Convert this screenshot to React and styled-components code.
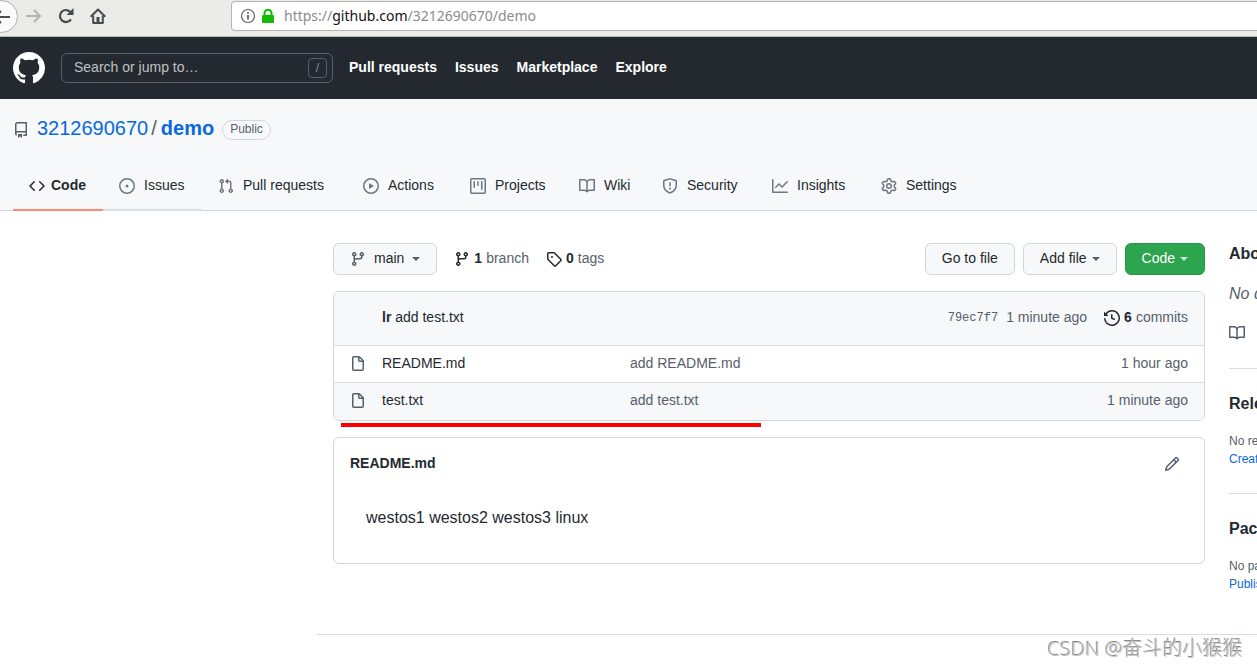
import { useState } from "react";
import styled, { createGlobalStyle, css } from "styled-components";

const GlobalStyle = createGlobalStyle`
    * {
        box-sizing: border-box;
    }

    body {
        margin: 0;
        background-color: #fff;
        color: #24292f;
        font-family: "Liberation Sans", Arial, sans-serif;
        font-size: 14px;
        line-height: 20px;
    }

    a {
        color: inherit;
        text-decoration: none;
    }
`;

const Page = styled.div`
    position: relative;
    min-height: 100vh;
    overflow: hidden;
`;

/* browser toolbar */

const Toolbar = styled.div`
    display: flex;
    align-items: flex-start;
    height: 37px;
    background-color: #ebebe9;
    border-bottom: 1px solid #b8b8b4;
`;

const BackButton = styled.button`
    display: flex;
    align-items: center;
    justify-content: center;
    flex: none;
    width: 33px;
    height: 33px;
    margin-left: -15px;
    padding: 0;
    border: 1px solid #b0b0ab;
    border-radius: 50%;
    background-color: #fbfbfb;
    color: #4a4f50;
`;

const ToolButton = styled.button`
    display: flex;
    align-items: center;
    justify-content: center;
    flex: none;
    width: 32px;
    height: 32px;
    padding: 0;
    border: none;
    background: none;
    color: ${(props) => (props.$dim ? "#b2b3b1" : "#454b4d")};
`;

const AddressBar = styled.div`
    display: flex;
    align-items: center;
    flex: 1;
    gap: 4px;
    height: 30px;
    margin: 1px 0 0 117px;
    padding: 0 0 0 8px;
    border: 1px solid #b5b5b0;
    border-right: none;
    border-radius: 4px 0 0 4px;
    background-color: #fff;
`;

const Url = styled.a`
    margin-left: 4px;
    color: #8b8b8b;
    font-family: "Noto Sans", sans-serif;

    strong {
        color: #111;
        font-weight: 400;
    }
`;

/* site header */

const SiteHeader = styled.header`
    display: flex;
    align-items: center;
    gap: 16px;
    height: 62px;
    padding: 0 13px;
    background-color: #24292f;
    color: #fff;
`;

const Logo = styled.a`
    display: flex;
`;

const SearchBox = styled.label`
    display: flex;
    align-items: center;
    width: 272px;
    height: 30px;
    padding: 0 5px 0 12px;
    border: 1px solid #57606a;
    border-radius: 6px;

    input {
        flex: 1;
        min-width: 0;
        padding: 0 0 2px;
        border: none;
        outline: none;
        background: none;
        color: #fff;
        font: inherit;
    }

    input::placeholder {
        color: #bfc2c5;
        opacity: 1;
    }

    kbd {
        width: 19px;
        height: 20px;
        border: 1px solid #57606a;
        border-radius: 4px;
        color: #8b9198;
        font-family: inherit;
        font-size: 12px;
        line-height: 19px;
        text-align: center;
    }
`;

const SiteNav = styled.nav`
    display: flex;
    gap: 18px;
    padding-bottom: 2px;
    font-weight: 700;
`;

/* repository header */

const RepoHead = styled.div`
    padding: 15px 13px 0;
    border-bottom: 1px solid #d0d7de;
    background-color: #f6f8fa;
`;

const RepoTitle = styled.h1`
    display: flex;
    align-items: center;
    height: 28px;
    margin: 0 0 20px;
    color: #57606a;
    font-size: 20px;
    font-weight: 400;

    a {
        color: #0969da;
    }

    svg {
        margin: 3px 8px 0 0;
    }

    a:last-of-type {
        font-weight: 700;
    }
`;

const Slash = styled.span`
    margin: 0 4px 0 3px;
`;

const Pill = styled.span`
    height: 20px;
    margin: 3px 0 0 8px;
    padding: 0 7px;
    border: 1px solid #d0d7de;
    border-radius: 10px;
    font-size: 12px;
    line-height: 17px;
`;

const Tabs = styled.nav`
    display: flex;
    height: 48px;
`;

const Tab = styled.a`
    display: flex;
    align-items: center;
    flex: none;
    gap: ${(props) => (props.$active ? 6 : 9)}px;
    width: ${(props) => props.$width}px;
    height: 49px;
    padding: 0 0 2px 16px;
    border-bottom: 2px solid ${(props) => (props.$hovered ? "#dadfe3" : "transparent")};
    white-space: nowrap;

    svg {
        margin-top: 2px;
        color: #6e7781;
    }

    ${(props) =>
        props.$active &&
        css`
            border-bottom-color: #fd8c73;
            font-weight: 700;

            svg {
                color: #24292f;
            }
        `}
`;

/* content */

/* the sidebar keeps its full width and runs past the window edge */
const Content = styled.div`
    display: grid;
    grid-template-columns: minmax(0, 1fr) 296px;
    gap: 24px;
    margin: 32px -268px 0 333px;
`;

const Actions = styled.div`
    display: flex;
    align-items: center;
    gap: 8px;
    margin-bottom: 16px;
`;

const Button = styled.button`
    display: flex;
    align-items: center;
    gap: ${(props) => (props.$roomy ? 8 : 5)}px;
    height: 32px;
    padding: 0 16px 2px;
    border: 1px solid ${(props) => (props.$primary ? "#2a9147" : "#d3d6d9")};
    border-radius: 6px;
    background-color: ${(props) => (props.$primary ? "#2da44e" : "#f6f8fa")};
    color: ${(props) => (props.$primary ? "#fff" : "#24292f")};
    font: inherit;
    white-space: nowrap;

    svg {
        margin-top: 2px;
        color: #57606a;
    }
`;

const Caret = styled.span`
    margin-top: 2px;
    border: 4px solid transparent;
    border-top-color: ${(props) => (props.$light ? "#c9e8d1" : "#57606a")};
    border-bottom: none;
`;

const Stat = styled.a`
    display: flex;
    align-items: center;
    gap: 4px;
    height: 32px;
    margin-left: 9px;
    padding-bottom: 2px;
    color: #57606a;

    svg {
        margin-top: 2px;
    }

    svg,
    strong {
        color: #24292f;
    }
`;

const Spacer = styled.div`
    flex: 1;
`;

const Box = styled.section`
    overflow: hidden;
    border: 1px solid #d0d7de;
    border-radius: 6px;
`;

const CommitBar = styled.div`
    display: flex;
    align-items: center;
    height: 53px;
    padding: 0 16px 4px 48px;
    background-color: #f6f8fa;

    ${Stat} {
        padding-bottom: 0;
    }
`;

const CommitHash = styled.a`
    margin: 2px 8px 0 0;
    color: #57606a;
    font-family: "Liberation Mono", monospace;
    font-size: 12px;
`;

const CommitTime = styled.span`
    margin-right: 8px;
    color: #57606a;
`;

const FileTable = styled.table`
    width: 100%;
    table-layout: fixed;
    border-spacing: 0;

    td {
        height: 37px;
        padding: 0 0 2px;
        border-top: 1px solid #d8dee4;
        color: #57606a;
    }

    tr:last-child td {
        height: 38px;
        padding-bottom: 4px;
        background-color: #f6f8fa;
    }

    td:first-child {
        width: 48px;
        padding-left: 16px;
    }

    td:nth-child(2) {
        width: 248px;
        color: #24292f;
    }

    td:last-child {
        width: 120px;
        padding-right: 16px;
        text-align: right;
    }

    svg {
        display: block;
        margin-top: 2px;
    }
`;

const Underline = styled.div`
    width: 420px;
    max-width: 100%;
    height: 4px;
    margin: 2px 0 10px 8px;
    background-color: #ff0000;
`;

const ReadmeHead = styled.div`
    display: flex;
    align-items: center;
    justify-content: space-between;
    padding: 15px 24px 0 16px;

    h2 {
        margin: 0 0 2px;
        font-size: 14px;
        line-height: 20px;
    }

    button {
        display: flex;
        padding: 0;
        border: none;
        background: none;
        color: #57606a;
    }
`;

const ReadmeBody = styled.p`
    margin: 0;
    padding: 31px 32px 33px;
    font-size: 16px;
    line-height: 24px;
`;

const Sidebar = styled.aside`
    white-space: nowrap;
`;

const SideBlock = styled.section`
    height: 125px;
    padding-top: 25px;
    border-top: 1px solid #d8dee4;
    color: #57606a;
    font-size: 12px;
    line-height: 18px;

    &:first-child {
        height: auto;
        padding: 1px 0 26px;
        border-top: none;
    }

    h2 {
        margin: 0 0 18px;
        color: #24292f;
        font-size: 16px;
        line-height: 20px;
    }

    p {
        margin: 0;
    }

    p a {
        color: #0969da;
    }
`;

const About = styled.p`
    font-size: 16px;
    font-style: italic;
    line-height: 24px;
`;

const ReadmeLink = styled.a`
    display: flex;
    align-items: center;
    gap: 16px;
    margin-top: 18px;
    font-size: 14px;
`;

const Footer = styled.footer`
    height: 32px;
    margin: 16px 0 0 317px;
    border-top: 1px solid #d8dee4;
`;

const Watermark = styled.div`
    position: absolute;
    right: 14px;
    top: 635px;
    color: #c4c4c4;
    font-family: "Noto Sans", "Noto Sans CJK SC", sans-serif;
    font-size: 20px;
    font-weight: 300;
    line-height: 28px;
    text-shadow: -1px -1px 0 #8a8a8a;
`;

const icons = {
    github: "M8 0C3.58 0 0 3.58 0 8c0 3.54 2.29 6.53 5.47 7.59.4.07.55-.17.55-.38 0-.19-.01-.82-.01-1.49-2.01.37-2.53-.49-2.69-.94-.09-.23-.48-.94-.82-1.13-.28-.15-.68-.52-.01-.53.63-.01 1.08.58 1.23.82.72 1.21 1.87.87 2.33.66.07-.52.28-.87.51-1.07-1.78-.2-3.64-.89-3.64-3.95 0-.87.31-1.59.82-2.15-.08-.2-.36-1.02.08-2.12 0 0 .67-.21 2.2.82.64-.18 1.32-.27 2-.27.68 0 1.36.09 2 .27 1.53-1.04 2.2-.82 2.2-.82.44 1.1.16 1.92.08 2.12.51.56.82 1.27.82 2.15 0 3.07-1.87 3.75-3.65 3.95.29.25.54.73.54 1.48 0 1.07-.01 1.93-.01 2.2 0 .21.15.46.55.38A8.013 8.013 0 0016 8c0-4.42-3.58-8-8-8z",
    repo: "M2 2.5A2.5 2.5 0 014.5 0h8.75a.75.75 0 01.75.75v12.5a.75.75 0 01-.75.75h-2.5a.75.75 0 110-1.5h1.75v-2h-8a1 1 0 00-.714 1.7.75.75 0 01-1.072 1.05A2.495 2.495 0 012 11.5v-9zm10.5-1V9h-8c-.356 0-.694.074-1 .208V2.5a1 1 0 011-1h8zM5 12.25v3.25a.25.25 0 00.4.2l1.45-1.087a.25.25 0 01.3 0L8.6 15.7a.25.25 0 00.4-.2v-3.25a.25.25 0 00-.25-.25h-3.5a.25.25 0 00-.25.25z",
    code: "M4.72 3.22a.75.75 0 011.06 1.06L2.06 8l3.72 3.72a.75.75 0 11-1.06 1.06L.47 8.53a.75.75 0 010-1.06l4.25-4.25zm6.56 0a.75.75 0 10-1.06 1.06L13.94 8l-3.72 3.72a.75.75 0 101.06 1.06l4.25-4.25a.75.75 0 000-1.06l-4.25-4.25z",
    issue: "M8 9.5a1.5 1.5 0 100-3 1.5 1.5 0 000 3zM8 0a8 8 0 100 16A8 8 0 008 0zM1.5 8a6.5 6.5 0 1113 0 6.5 6.5 0 01-13 0z",
    pull: "M7.177 3.073L9.573.677A.25.25 0 0110 .854v4.792a.25.25 0 01-.427.177L7.177 3.427a.25.25 0 010-.354zM3.75 2.5a.75.75 0 100 1.5.75.75 0 000-1.5zm-2.25.75a2.25 2.25 0 113 2.122v5.256a2.251 2.251 0 11-1.5 0V5.372A2.25 2.25 0 011.5 3.25zM11 2.5h-1V4h1a1 1 0 011 1v5.628a2.251 2.251 0 101.5 0V5A2.5 2.5 0 0011 2.5zm1 10.25a.75.75 0 111.5 0 .75.75 0 01-1.5 0zM3.75 12a.75.75 0 100 1.5.75.75 0 000-1.5z",
    play: "M1.5 8a6.5 6.5 0 1113 0 6.5 6.5 0 01-13 0zM8 0a8 8 0 100 16A8 8 0 008 0zM6.379 5.227A.25.25 0 006 5.442v5.117a.25.25 0 00.379.214l4.264-2.559a.25.25 0 000-.428L6.379 5.227z",
    project: "M1.75 0A1.75 1.75 0 000 1.75v12.5C0 15.216.784 16 1.75 16h12.5A1.75 1.75 0 0016 14.25V1.75A1.75 1.75 0 0014.25 0H1.75zM1.5 1.75a.25.25 0 01.25-.25h12.5a.25.25 0 01.25.25v12.5a.25.25 0 01-.25.25H1.75a.25.25 0 01-.25-.25V1.75zM11.75 3a.75.75 0 00-.75.75v7.5a.75.75 0 001.5 0v-7.5a.75.75 0 00-.75-.75zm-8.25.75a.75.75 0 011.5 0v5.5a.75.75 0 01-1.5 0v-5.5zM8 3a.75.75 0 00-.75.75v3.5a.75.75 0 001.5 0v-3.5A.75.75 0 008 3z",
    book: "M0 1.75A.75.75 0 01.75 1h4.253c1.227 0 2.317.59 3 1.501A3.744 3.744 0 0111.006 1h4.245a.75.75 0 01.75.75v10.5a.75.75 0 01-.75.75h-4.507a2.25 2.25 0 00-1.591.659l-.622.621a.75.75 0 01-1.06 0l-.622-.621A2.25 2.25 0 005.258 13H.75a.75.75 0 01-.75-.75V1.75zm8.755 3a2.25 2.25 0 012.25-2.25H14.5v9h-3.757c-.71 0-1.4.201-1.992.572l.004-7.322zm-1.504 7.324l.004-5.073-.002-2.253A2.25 2.25 0 005.003 2.5H1.5v9h3.757a3.75 3.75 0 011.994.574z",
    shield: "M7.467.133a1.75 1.75 0 011.066 0l5.25 1.68A1.75 1.75 0 0115 3.48V7c0 1.566-.32 3.182-1.303 4.682-.983 1.498-2.585 2.813-5.032 3.855a1.7 1.7 0 01-1.33 0c-2.447-1.042-4.049-2.357-5.032-3.855C1.32 10.182 1 8.566 1 7V3.48a1.75 1.75 0 011.217-1.667l5.25-1.68zm.61 1.429a.25.25 0 00-.153 0l-5.25 1.68a.25.25 0 00-.174.238V7c0 1.358.275 2.666 1.057 3.86.784 1.194 2.121 2.34 4.366 3.297a.2.2 0 00.154 0c2.245-.956 3.582-2.104 4.366-3.298C13.225 9.666 13.5 8.36 13.5 7V3.48a.25.25 0 00-.174-.237l-5.25-1.68zM9 10.5a1 1 0 11-2 0 1 1 0 012 0zm-.25-5.75a.75.75 0 10-1.5 0v3a.75.75 0 001.5 0v-3z",
    graph: "M1.5 1.75a.75.75 0 00-1.5 0v12.5c0 .414.336.75.75.75h14.5a.75.75 0 000-1.5H1.5V1.75zm14.28 2.53a.75.75 0 00-1.06-1.06L10 7.94 7.53 5.47a.75.75 0 00-1.06 0L3.22 8.72a.75.75 0 001.06 1.06L7 7.06l2.47 2.47a.75.75 0 001.06 0l5.25-5.25z",
    gear: "M7.429 1.525a6.593 6.593 0 011.142 0c.036.003.108.036.137.146l.289 1.105c.147.56.55.967.997 1.189.174.086.341.183.501.29.417.278.97.423 1.53.27l1.102-.303c.11-.03.175.016.195.046.219.31.41.641.573.989.014.031.022.11-.059.19l-.815.806c-.411.406-.562.957-.53 1.456a4.588 4.588 0 010 .582c-.032.499.119 1.05.53 1.456l.815.806c.08.08.073.159.059.19a6.494 6.494 0 01-.573.99c-.02.029-.086.074-.195.045l-1.103-.303c-.559-.153-1.112-.008-1.529.27-.16.107-.327.204-.5.29-.449.222-.851.628-.998 1.189l-.289 1.105c-.029.11-.101.143-.137.146a6.613 6.613 0 01-1.142 0c-.036-.003-.108-.037-.137-.146l-.289-1.105c-.147-.56-.55-.967-.997-1.189a4.502 4.502 0 01-.501-.29c-.417-.278-.97-.423-1.53-.27l-1.102.303c-.11.03-.175-.016-.195-.046a6.492 6.492 0 01-.573-.989c-.014-.031-.022-.11.059-.19l.815-.806c.411-.406.562-.957.53-1.456a4.587 4.587 0 010-.582c.032-.499-.119-1.05-.53-1.456l-.815-.806c-.08-.08-.073-.159-.059-.19a6.44 6.44 0 01.573-.99c.02-.029.086-.075.195-.045l1.103.303c.559.153 1.112.008 1.529-.27.16-.107.327-.204.5-.29.449-.222.851-.628.998-1.189l.289-1.105c.029-.11.101-.143.137-.146zM8 0c-.236 0-.47.01-.701.03-.743.065-1.29.615-1.458 1.261l-.29 1.106c-.017.066-.078.158-.211.224a5.994 5.994 0 00-.668.386c-.123.082-.233.09-.3.071L3.27 2.776c-.644-.177-1.392.02-1.82.63a7.977 7.977 0 00-.704 1.217c-.315.675-.111 1.422.363 1.891l.815.806c.05.048.098.147.088.294a6.084 6.084 0 000 .772c.01.147-.038.246-.088.294l-.815.806c-.474.469-.678 1.216-.363 1.891.2.428.436.835.704 1.218.428.609 1.176.806 1.82.63l1.103-.303c.066-.019.176-.011.299.071.213.143.436.272.668.386.133.066.194.158.212.224l.289 1.106c.169.646.715 1.196 1.458 1.26a8.094 8.094 0 001.402 0c.743-.064 1.29-.614 1.458-1.26l.29-1.106c.017-.066.078-.158.211-.224a5.98 5.98 0 00.668-.386c.123-.082.233-.09.3-.071l1.102.302c.644.177 1.392-.02 1.82-.63.268-.382.505-.789.704-1.217.315-.675.111-1.422-.364-1.891l-.814-.806c-.05-.048-.098-.147-.088-.294a6.1 6.1 0 000-.772c-.01-.147.039-.246.088-.294l.814-.806c.475-.469.679-1.216.364-1.891a7.992 7.992 0 00-.704-1.218c-.428-.609-1.176-.806-1.82-.63l-1.103.303c-.066.019-.176.011-.299-.071a5.991 5.991 0 00-.668-.386c-.133-.066-.194-.158-.212-.224L10.16 1.29C9.99.645 9.444.095 8.701.031A8.094 8.094 0 008 0zm1.5 8a1.5 1.5 0 11-3 0 1.5 1.5 0 013 0zM11 8a3 3 0 11-6 0 3 3 0 016 0z",
    branch: "M11.75 2.5a.75.75 0 100 1.5.75.75 0 000-1.5zm-2.25.75a2.25 2.25 0 113 2.122V6A2.5 2.5 0 0110 8.5H6a1 1 0 00-1 1v1.128a2.251 2.251 0 11-1.5 0V5.372a2.25 2.25 0 111.5 0v1.836A2.492 2.492 0 016 7h4a1 1 0 001-1v-.628A2.25 2.25 0 019.5 3.25zM4.25 12a.75.75 0 100 1.5.75.75 0 000-1.5zM3.5 3.25a.75.75 0 111.5 0 .75.75 0 01-1.5 0z",
    tag: "M2.5 7.775V2.75a.25.25 0 01.25-.25h5.025a.25.25 0 01.177.073l6.25 6.25a.25.25 0 010 .354l-5.025 5.025a.25.25 0 01-.354 0l-6.25-6.25a.25.25 0 01-.073-.177zm-1.5 0V2.75C1 1.784 1.784 1 2.75 1h5.025c.464 0 .91.184 1.238.513l6.25 6.25a1.75 1.75 0 010 2.474l-5.026 5.026a1.75 1.75 0 01-2.474 0l-6.25-6.25A1.75 1.75 0 011 7.775zM6 5a1 1 0 100 2 1 1 0 000-2z",
    history: "M1.643 3.143L.427 1.927A.25.25 0 000 2.104V5.75c0 .138.112.25.25.25h3.646a.25.25 0 00.177-.427L2.715 4.215a6.5 6.5 0 11-1.18 4.458.75.75 0 10-1.493.154 8.001 8.001 0 101.6-5.684zM7.75 4a.75.75 0 01.75.75v2.992l2.028.812a.75.75 0 01-.557 1.392l-2.5-1A.75.75 0 017 8.25v-3.5A.75.75 0 017.75 4z",
    file: "M3.75 1.5a.25.25 0 00-.25.25v11.5c0 .138.112.25.25.25h8.5a.25.25 0 00.25-.25V6H9.75A1.75 1.75 0 018 4.25V1.5H3.75zm5.75.56v2.19c0 .138.112.25.25.25h2.19L9.5 2.06zM2 1.75C2 .784 2.784 0 3.75 0h5.086c.464 0 .909.184 1.237.513l3.414 3.414c.329.328.513.773.513 1.237v8.086A1.75 1.75 0 0112.25 15h-8.5A1.75 1.75 0 012 13.25V1.75z",
    pencil: "M11.013 1.427a1.75 1.75 0 012.474 0l1.086 1.086a1.75 1.75 0 010 2.474l-8.61 8.61c-.21.21-.47.364-.756.445l-3.251.93a.75.75 0 01-.927-.928l.929-3.25a1.75 1.75 0 01.445-.758l8.61-8.61zm1.414 1.06a.25.25 0 00-.354 0L10.811 3.75l1.439 1.44 1.263-1.263a.25.25 0 000-.354l-1.086-1.086zM11.189 6.25L9.75 4.81l-6.286 6.287a.25.25 0 00-.064.108l-.558 1.953 1.953-.558a.249.249 0 00.108-.064l6.286-6.286z",
};

function Icon({ name, size = 16 }) {
    return (
        <svg width={size} height={size} viewBox="0 0 16 16" fill="currentColor" aria-hidden="true">
            <path fillRule="evenodd" d={icons[name]} />
        </svg>
    );
}

const tabs = [
    { label: "Code", icon: "code", width: 90, active: true },
    { label: "Issues", icon: "issue", width: 99, hovered: true },
    { label: "Pull requests", icon: "pull", width: 145 },
    { label: "Actions", icon: "play", width: 107 },
    { label: "Projects", icon: "project", width: 109 },
    { label: "Wiki", icon: "book", width: 83 },
    { label: "Security", icon: "shield", width: 110 },
    { label: "Insights", icon: "graph", width: 109 },
    { label: "Settings", icon: "gear", width: 108 },
];

const files = [
    { name: "README.md", message: "add README.md", age: "1 hour ago" },
    { name: "test.txt", message: "add test.txt", age: "1 minute ago" },
];

function BrowserToolbar() {
    return (
        <Toolbar>
            <BackButton aria-label="Back">
                <svg width="18" height="16" viewBox="0 0 18 16" fill="none" stroke="currentColor" strokeWidth="2">
                    <path d="M17 8H2M8 2L2 8l6 6" />
                </svg>
            </BackButton>
            <ToolButton $dim aria-label="Forward">
                <svg width="16" height="14" viewBox="0 0 16 14" fill="none" stroke="currentColor" strokeWidth="2">
                    <path d="M0 7h14M8 1l6 6-6 6" />
                </svg>
            </ToolButton>
            <ToolButton aria-label="Reload">
                <svg width="16" height="16" viewBox="0 0 16 16" fill="none" stroke="currentColor" strokeWidth="2.2">
                    <path d="M13 11.3A6 6 0 1 1 12.6 4.2" />
                    <path d="M15.5 0v7H8.5z" fill="currentColor" stroke="none" />
                </svg>
            </ToolButton>
            <ToolButton aria-label="Home">
                <svg width="16" height="16" viewBox="0 0 16 16" fill="none" stroke="currentColor" strokeLinejoin="round">
                    <path d="M.7 8.7L8 1.5l7.3 7.2" strokeWidth="2" />
                    <path d="M3.2 7.5v7.4h9.6V7.5" strokeWidth="2" />
                    <path d="M6.5 9h3v6h-3z" fill="currentColor" stroke="none" />
                </svg>
            </ToolButton>
            <AddressBar>
                <svg width="16" height="16" viewBox="0 0 16 16" fill="none" stroke="#606060">
                    <circle cx="8" cy="8" r="6.5" strokeWidth="1.2" />
                    <path d="M8 7v4.5M8 4v1.8" strokeWidth="1.8" />
                </svg>
                <svg width="16" height="16" viewBox="0 0 16 16" fill="#12bc00">
                    <rect x="2" y="7" width="12" height="8" rx="1" />
                    <path d="M4.5 8V5.2a3.5 3.5 0 017 0V8" fill="none" stroke="#12bc00" strokeWidth="2" />
                </svg>
                <Url href="#">
                    https://<strong>github.com</strong>/3212690670/demo
                </Url>
            </AddressBar>
        </Toolbar>
    );
}

export default function App() {
    const [search, setSearch] = useState("");

    return (
        <Page>
            <GlobalStyle />
            <BrowserToolbar />
            <SiteHeader>
                <Logo href="#" aria-label="Homepage">
                    <Icon name="github" size={32} />
                </Logo>
                <SearchBox>
                    <input
                        aria-label="Search"
                        placeholder="Search or jump to…"
                        value={search}
                        onChange={(ev) => setSearch(ev.target.value)}
                    />
                    <kbd>/</kbd>
                </SearchBox>
                <SiteNav>
                    <a href="#">Pull requests</a>
                    <a href="#">Issues</a>
                    <a href="#">Marketplace</a>
                    <a href="#">Explore</a>
                </SiteNav>
            </SiteHeader>

            <RepoHead>
                <RepoTitle>
                    <Icon name="repo" />
                    <a href="#">3212690670</a>
                    <Slash>/</Slash>
                    <a href="#">demo</a>
                    <Pill>Public</Pill>
                </RepoTitle>
                <Tabs>
                    {tabs.map((tab) => (
                        <Tab
                            key={tab.label}
                            href="#"
                            $width={tab.width}
                            $active={tab.active}
                            $hovered={tab.hovered}
                        >
                            <Icon name={tab.icon} />
                            {tab.label}
                        </Tab>
                    ))}
                </Tabs>
            </RepoHead>

            <Content>
                <main>
                    <Actions>
                        <Button $roomy>
                            <Icon name="branch" />
                            main
                            <Caret />
                        </Button>
                        <Stat href="#">
                            <Icon name="branch" />
                            <strong>1</strong> branch
                        </Stat>
                        <Stat href="#">
                            <Icon name="tag" />
                            <strong>0</strong> tags
                        </Stat>
                        <Spacer />
                        <Button>Go to file</Button>
                        <Button>
                            Add file
                            <Caret />
                        </Button>
                        <Button $primary>
                            Code
                            <Caret $light />
                        </Button>
                    </Actions>

                    <Box>
                        <CommitBar>
                            <a href="#">
                                <strong>lr</strong> add test.txt
                            </a>
                            <Spacer />
                            <CommitHash href="#">79ec7f7</CommitHash>
                            <CommitTime>1 minute ago</CommitTime>
                            <Stat href="#">
                                <Icon name="history" />
                                <strong>6</strong> commits
                            </Stat>
                        </CommitBar>
                        <FileTable>
                            <tbody>
                                {files.map((file) => (
                                    <tr key={file.name}>
                                        <td>
                                            <Icon name="file" />
                                        </td>
                                        <td>
                                            <a href="#">{file.name}</a>
                                        </td>
                                        <td>
                                            <a href="#">{file.message}</a>
                                        </td>
                                        <td>{file.age}</td>
                                    </tr>
                                ))}
                            </tbody>
                        </FileTable>
                    </Box>

                    <Underline />

                    <Box>
                        <ReadmeHead>
                            <h2>README.md</h2>
                            <button aria-label="Edit README.md">
                                <Icon name="pencil" />
                            </button>
                        </ReadmeHead>
                        <ReadmeBody>westos1 westos2 westos3 linux</ReadmeBody>
                    </Box>
                </main>

                <Sidebar>
                    <SideBlock>
                        <h2>About</h2>
                        <About>No description, website, or topics provided.</About>
                        <ReadmeLink href="#">
                            <Icon name="book" />
                            Readme
                        </ReadmeLink>
                    </SideBlock>
                    <SideBlock>
                        <h2>Releases</h2>
                        <p>No releases published</p>
                        <p>
                            <a href="#">Create a new release</a>
                        </p>
                    </SideBlock>
                    <SideBlock>
                        <h2>Packages</h2>
                        <p>No packages published</p>
                        <p>
                            <a href="#">Publish your first package</a>
                        </p>
                    </SideBlock>
                </Sidebar>
            </Content>

            <Footer />
            <Watermark>CSDN @奋斗的小猴猴</Watermark>
        </Page>
    );
}
